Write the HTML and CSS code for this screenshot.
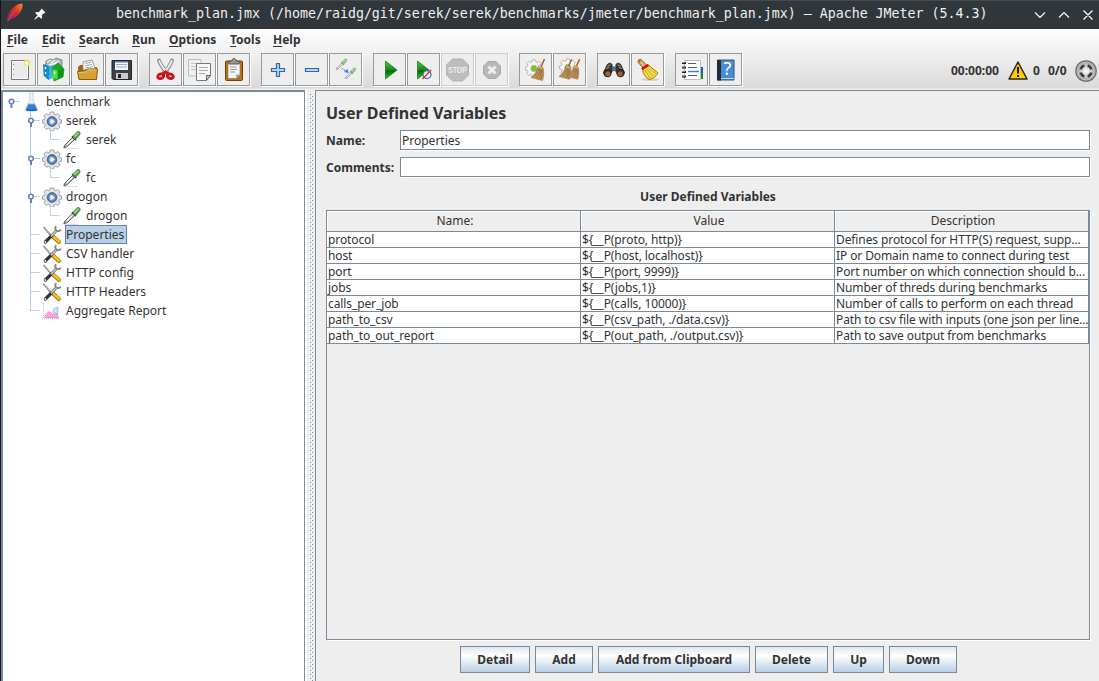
FILE: index.html
```html
<!DOCTYPE html>
<html lang="en">
<head>
<meta charset="utf-8">
<title>Apache JMeter (5.4.3)</title>
<link rel="stylesheet" href="styles.css">
</head>
<body>
<svg class="defs" width="0" height="0">
  <defs>
    <linearGradient id="play" x1="0" y1="0" x2="0" y2="1"><stop offset="0" stop-color="#4fc94f"/><stop offset=".5" stop-color="#138a13"/><stop offset=".55" stop-color="#006400"/><stop offset="1" stop-color="#22d022"/></linearGradient>
    <linearGradient id="flame" x1="1" y1="0" x2="0" y2="1"><stop offset="0" stop-color="#f3a01e"/><stop offset=".4" stop-color="#dc2c2c"/><stop offset="1" stop-color="#752783"/></linearGradient>
    <radialGradient id="blue"><stop offset="0" stop-color="#dce9fb"/><stop offset=".5" stop-color="#8ba9d6"/><stop offset="1" stop-color="#2f568f"/></radialGradient>
    <radialGradient id="grey"><stop offset="0" stop-color="#fff"/><stop offset="1" stop-color="#aaa"/></radialGradient>
    <symbol id="gear" viewBox="0 0 20 20">
      <path d="M8.300 1h3.400l.5 2.200 1.500.6 2-1.200 2.300 2.300-1.200 2 .6 1.500 2.100.5v3.200l-2.100.5-.6 1.500 1.200 2-2.300 2.300-2-1.200-1.500.6-.5 2.200H8.300l-.5-2.200-1.500-.6-2 1.200L2 16.100l1.200-2-.6-1.500-2.100-.5V8.900l2.100-.5.6-1.500-1.200-2 2.300-2.300 2 1.200 1.500-.6z" fill="#e4e5e6" stroke="#94989b" stroke-width=".9"/>
      <circle cx="10" cy="10.500" r="4.900" fill="url(#blue)" stroke="#4a6a98" stroke-width=".8"/>
      <path d="M8.500 7.700v5.600l4.300-2.800z" fill="#f3f7ff"/>
    </symbol>
    <symbol id="pipette" viewBox="0 0 20 20">
      <path d="M2 18.500h14" stroke="#ddd" stroke-width="1"/>
      <path d="M1.800 17.600l1-2.400 7.600-7.700 2.100 2-7.500 7.300z" fill="#bfc3c3" stroke="#444" stroke-width=".9"/>
      <path d="M5 14.700l5.500-5.500" stroke="#fff" stroke-width="1.200"/>
      <path d="M10 6.200l4 4" stroke="#37483b" stroke-width="1.800"/>
      <path d="M13.200 6.800l3-3.300" stroke="#4f9440" stroke-width="4.800" stroke-linecap="round"/>
      <path d="M13 6.200l2.900-3" stroke="#94cb80" stroke-width="2" stroke-linecap="round"/>
    </symbol>
    <symbol id="tools" viewBox="0 0 20 20">
      <path d="M1.500 2l7 8" stroke="#777" stroke-width="1.600"/><path d="M1.500 2l6.500 7" stroke="#ddd" stroke-width=".7"/>
      <path d="M11 11.500l6 5.500" stroke="#9a6600" stroke-width="4" stroke-linecap="round"/>
      <path d="M11 11.300l6 5.500" stroke="#f6bd20" stroke-width="2.800" stroke-linecap="round"/>
      <path d="M3.300 17L9.500 10.800" stroke="#333" stroke-width="3.200" stroke-linecap="round"/>
      <path d="M9 11.200L15 5" stroke="#666" stroke-width="2.800"/>
      <path d="M9 11.200L15 5" stroke="#ccc" stroke-width="1.400"/>
      <path d="M14.200 1.200c-2 2-.6 5.500 2.600 4.800l2.200-1.200" fill="none" stroke="#888" stroke-width="1.900"/>
      <circle cx="3.300" cy="17" r="1" fill="#eee"/>
    </symbol>
    <symbol id="cog" viewBox="0 0 20 20">
      <path d="M8.300 1h3.400l.5 2.200 1.500.6 2-1.200 2.300 2.300-1.200 2 .6 1.500 2.100.5v3.200l-2.100.5-.6 1.500 1.200 2-2.300 2.300-2-1.200-1.500.6-.5 2.200H8.300l-.5-2.200-1.500-.6-2 1.200L2 16.100l1.200-2-.6-1.500-2.100-.5V8.900l2.100-.5.6-1.500-1.200-2 2.300-2.300 2 1.200 1.500-.6z" fill="#f4f4f4" stroke="#b0b0b0" stroke-width="1"/>
      <circle cx="10" cy="10.500" r="3.500" fill="#72c427" stroke="#a9bb98"/>
    </symbol>
    <symbol id="broom" viewBox="0 0 16 24">
      <path d="M14.500 1L10.500 10" stroke="#a06025" stroke-width="1.500"/>
      <path d="M8.500 8l4.500 1.500c1.200 4 .8 9-.5 13L1 19.500C4.500 17 7 13 8.500 8z" fill="#bf9660" stroke="#956d3e" stroke-width=".6"/>
      <path d="M9 11c-1 3-3 6-5.500 8M10 11c0 4-2 7-4 9M11 11c0 4-.5 8-2.500 10M12 12c.3 4-.2 7-1.300 9" fill="none" stroke="#835b31" stroke-width=".6"/>
      <path d="M9 8.500l3.500 1.500" stroke="#d8b27a" stroke-width="1.500"/>
    </symbol>
  </defs>
</svg>
<div class="window">
  <header class="titlebar">
    <svg class="feather" viewBox="0 0 18 20" width="18" height="20"><path d="M1 18.500C1 13 3 8.500 7.500 4.500 10.500 2 14 .2 16.500 1c.5 4-1.500 8-5 11.500C8 15.500 5 16.300 3 16.500L1.500 19z" fill="url(#flame)"/><path d="M2 18C6 11 10 6 15 2" fill="none" stroke="#ef5731" stroke-width=".8"/></svg>
    <svg class="pin" viewBox="0 0 12 12" width="12" height="12"><path d="M7.500.5l4 4-1.200.4-2.400 2.400.2 2.500-1 .9-2.300-2.300L.8 11.800l-.5-.5L3.500 7.200 1.200 4.900l1-.9 2.500.2 2.300-2.400z" fill="#fcfcfc"/></svg>
    <h1 class="caption">benchmark_plan.jmx (/home/raidg/git/serek/serek/benchmarks/jmeter/benchmark_plan.jmx) – Apache JMeter (5.4.3)</h1>
    <svg class="controls" viewBox="0 0 64 12" width="64" height="12" fill="none" stroke="#fcfcfc" stroke-width="1.200"><path d="M1 3.500l5 5 5-5M25 8.500l5-5 5 5M49.500 1.500l9 9M58.500 1.500l-9 9"/></svg>
  </header>
  <div class="chrome">
    <nav class="menu">
      <span class="m-file"><u>F</u>ile</span><span class="m-edit"><u>E</u>dit</span><span class="m-search"><u>S</u>earch</span><span class="m-run"><u>R</u>un</span><span class="m-options"><u>O</u>ptions</span><span class="m-tools"><u>T</u>ools</span><span><u>H</u>elp</span>
    </nav>
    <div class="toolbar">
      <div class="group">
        <span class="tool"><svg viewBox="1 1 31 31"><path d="M8.500 7.500h17v19h-17z" fill="#fafafa" stroke="#777"/><path d="M10 9h14v16H10z" fill="#eaeaea"/><path d="M10.500 11v1M10.500 16v1M10.500 21v1" stroke="#888"/><circle cx="24" cy="10" r="3.500" fill="#f4e66e" opacity=".8"/><circle cx="24" cy="10" r="1.500" fill="#fffbe0"/></svg></span>
        <span class="tool"><svg viewBox="1 1 31 31"><path d="M9 8l4-2 3 1 3-2 6 2v14H8z" fill="#aeb9bd" stroke="#68777e" stroke-width=".8"/><path d="M10 9l4-2M14 10l4-3M18 10l4-2M12 12l8-2" stroke="#f4f8f8" stroke-width="1.300"/><path d="M6.500 11.500l5 2v13l-4.500-4z" fill="#138bcb" stroke="#0973ad" stroke-width=".7"/><path d="M12 13l7-1v12l-7 2.500z" fill="#36b5e7"/><path d="M8.500 14v2M8.500 19v2" stroke="#fff" stroke-width="1.500"/><path d="M15 15l6-5 6 6-1 8-9 4z" fill="#1ca91c" stroke="#168016" stroke-width=".7"/><path d="M15.500 16l5 1.500v8.500l-5-1z" fill="#54e044"/><path d="M21 17.500l5-1.500v7l-5 3z" fill="#119415"/><path d="M17.500 18.500v2.500" stroke="#fff" stroke-width="1.500"/></svg></span>
        <span class="tool"><svg viewBox="1 1 31 31"><path d="M7.500 20v-6l1.500-1.500h5l2 2h9.500v6z" fill="#9d6810" stroke="#8b5908" stroke-width=".8"/><path d="M12 17V9l9-2 3.500 9z" fill="#f7f7f7" stroke="#888" stroke-width=".8"/><path d="M14 10.500l6-1.300M14 12.700l7-1.200M14 15l8-1.300" stroke="#aaa"/><path d="M6.500 18.500l8-.5 2-2h10l-1 10.500H8z" fill="#d7a034" stroke="#8b5a0b"/><path d="M7.500 19.500l7.500-.5 2-2h8.500" stroke="#f0c766" fill="none"/></svg></span>
        <span class="tool"><svg viewBox="1 1 31 31"><path d="M7 7.500h19.500v19H8L7 25.500z" fill="#3f4143" stroke="#222"/><path d="M10 8h13v9H10z" fill="#f3f6fa"/><path d="M10 8h13v1.500H10z" fill="#4b7bb7"/><path d="M11 11.500h11M11 14h11" stroke="#9db2c8"/><path d="M11 20h12v6H11z" fill="#c8cbce"/><path d="M13 21h3v4h-3z" fill="#202327"/></svg></span>
      </div>
      <div class="group">
        <span class="tool"><svg viewBox="1 1 31 31"><path d="M10 7.500c2 5 4.500 9 8.500 12.500M23 7.500c-2 5-4.500 9-8.500 12.500" fill="none" stroke="#858585" stroke-width="3.800" stroke-linecap="round"/><path d="M10.300 8c2 5 4.500 8.500 8 11.500M22.700 8c-2 5-4.500 8.500-8 11.500" fill="none" stroke="#eee" stroke-width="2" stroke-linecap="round"/><g fill="none" stroke="#cf151b" stroke-width="3"><ellipse cx="11.700" cy="23.200" rx="3" ry="2.200" transform="rotate(-20 11.700 23.200)"/><ellipse cx="21.300" cy="23.200" rx="3" ry="2.200" transform="rotate(20 21.300 23.200)"/><path d="M14 21l2.500-2 2.500 2"/></g></svg></span>
        <span class="tool"><svg viewBox="1 1 31 31"><path d="M5.500 6.500h12.500v16.500H5.500z" fill="#f0f0f0" stroke="#bdbdbd"/><path d="M8 10.500h8M8 13.500h6M8 16.500h5" stroke="#c5c5c5"/><path d="M13.500 10.500h14v12l-4.500 5h-9.500z" fill="#f7f7f7" stroke="#777"/><path d="M27.500 22.500h-4v5z" fill="#ccc" stroke="#666"/><path d="M16 14.500h9M16 17.500h9M16 20.500h6" stroke="#aaa"/></svg></span>
        <span class="tool"><svg viewBox="1 1 31 31"><rect x="8.500" y="8" width="17" height="19.500" rx="1" fill="#b96f12" stroke="#754000"/><path d="M11 10h12v12l-3.500 3.500H11z" fill="#f6f6f6" stroke="#777" stroke-width=".7"/><path d="M23 21.500l-4 4v-4z" fill="#aaa"/><path d="M13 14h7M13 16.500h7M13 19h5" stroke="#999"/><path d="M12 11V8h3c0-3.500 4-3.500 4 0h3v3z" fill="#999b8e" stroke="#55574f"/></svg></span>
      </div>
      <div class="group">
        <span class="tool"><svg viewBox="1 1 31 31"><path d="M15.500 10.500h3v5h5v3h-5v5h-3v-5h-5v-3h5z" fill="#b5d5f4" stroke="#3465a4" stroke-width="1.200"/></svg></span>
        <span class="tool"><svg viewBox="1 1 31 31"><path d="M10.500 15.500h13v3h-13z" fill="#b5d5f4" stroke="#3465a4" stroke-width="1.200"/></svg></span>
        <span class="tool"><svg viewBox="1 1 31 31"><g opacity=".65"><use href="#pipette" x="6" y="5" width="13" height="13"/><use href="#pipette" x="15" y="14" width="13" height="13"/></g><path d="M13 15.500l4 2.500" stroke="#4b94f5" stroke-width="1.200" stroke-dasharray="1.500 1"/><path d="M19.500 20l-.8-4-3.700 3z" fill="#2b7ff0"/></svg></span>
      </div>
      <div class="group">
        <span class="tool"><svg viewBox="1 1 31 31"><path d="M12.500 8L24 17 12.500 26z" fill="url(#play)" stroke="#146b14" stroke-width=".7"/></svg></span>
        <span class="tool"><svg viewBox="1 1 31 31"><path d="M10.500 8L22 17 10.500 26z" fill="url(#play)" stroke="#146b14" stroke-width=".7"/><circle cx="20" cy="21.500" r="4" fill="#fff" fill-opacity=".8" stroke="#3f73b9" stroke-width="1.300"/><path d="M15.500 26l8.500-9" stroke="#e52525" stroke-width="1.400"/></svg></span>
        <span class="tool disabled"><svg viewBox="1 1 31 31"><path d="M11.500 6h10l6 6v10l-6 6h-10l-6-6V12z" fill="#bdbdbd" stroke="#b0b0b0"/><text x="16.500" y="20.200" text-anchor="middle" textLength="19" lengthAdjust="spacingAndGlyphs" class="stop">STOP</text></svg></span>
        <span class="tool disabled"><svg viewBox="1 1 31 31"><path d="M13 8.500h8l4.500 4.500v8L21 25.500h-8L8.500 21v-8z" fill="#b8b8b8" stroke="#a8a8a8"/><path d="M13.500 13.500l7 7M20.500 13.500l-7 7" stroke="#eee" stroke-width="3"/></svg></span>
      </div>
      <div class="group">
        <span class="tool"><svg viewBox="1 1 31 31"><use href="#cog" x="6" y="6" width="18" height="18"/><use href="#broom" x="11" y="5" width="16" height="24"/></svg></span>
        <span class="tool"><svg viewBox="1 1 31 31"><use href="#cog" x="6" y="5" width="18" height="18"/><use href="#broom" x="5" y="5" width="15" height="23"/><use href="#broom" x="13" y="5" width="15" height="23"/></svg></span>
      </div>
      <div class="group">
        <span class="tool"><svg viewBox="1 1 31 31"><path d="M10 12c1-2 4-2.500 5-.5l.5 6.500-3 4-6-2zM24 12c-1-2-4-2.500-5-.5l-.5 6.500 3 4 6-2z" fill="#3a3a3a" stroke="#222" stroke-width=".8"/><path d="M15 13.500h4v4.500h-4z" fill="#666"/><circle cx="10.500" cy="20" r="4.200" fill="#292929"/><circle cx="23.500" cy="20" r="4.200" fill="#292929"/><circle cx="10.800" cy="20.700" r="2.500" fill="#a85d31"/><circle cx="23.200" cy="20.700" r="2.500" fill="#a85d31"/><path d="M10.500 13l3-1.200M20.500 11.800l3 1.200M9 15.500l3-1M22 14.500l3 1" stroke="#aaa" stroke-width=".9"/></svg></span>
        <span class="tool"><svg viewBox="1 1 31 31"><ellipse cx="19" cy="26.500" rx="9" ry="1.500" fill="#cfcfcf"/><path d="M9 8.500l5 5" stroke="#976223" stroke-width="5" stroke-linecap="round"/><path d="M9 8.500l5 5" stroke="#e7b76e" stroke-width="3.200" stroke-linecap="round"/><circle cx="8.700" cy="8.300" r=".9" fill="#805017"/><path d="M11.500 16l6-4 9.500 8c-2 3.500-5 6-9 6.500-3.500-2-6-5.500-6.500-10.500z" fill="#ecd84a" stroke="#ad8200"/><path d="M14 17l5 8M16 16l6 7M18 15l7 6" stroke="#c9a913" stroke-width=".8" fill="none"/><path d="M10.800 16.200l6.500-4.400" stroke="#cf1717" stroke-width="2.700"/></svg></span>
      </div>
      <div class="group">
        <span class="tool"><svg viewBox="1 1 31 31"><path d="M24 20h4v6h-4z" fill="#17961b"/><path d="M24 14h4v6h-4z" fill="#1b5bb3"/><path d="M9.500 7.500h16v19h-16z" fill="#fdfdfd" stroke="#bbb"/><path d="M13 10.500h8M13 14.500h9M13 22.500h9" stroke="#4c5c70"/><path d="M13 12.500h0M13 18.500h11" stroke="#3980e8" stroke-width="1.500"/><path d="M7 10h4M7 14.500h4M7 19h4M7 23.500h4" stroke="#222" stroke-width="2"/><path d="M7 9.500h3M7 14h3M7 18.500h3M7 23h3" stroke="#bbb" stroke-width=".7"/></svg></span>
        <span class="tool"><svg viewBox="1 1 31 31"><path d="M8.500 7h16.500v20H8.500z" fill="#4a8ad2" stroke="#285894"/><path d="M8 7h4v20.500H8z" fill="#222b36"/><path d="M12 25.500h13" stroke="#c8d7e8"/><text x="18.500" y="22" text-anchor="middle" class="query">?</text></svg></span>
      </div>
      <div class="status">
        <span class="clock">00:00:00</span>
        <svg class="warn" viewBox="0 0 20 19" width="20" height="19"><path d="M10 1L19 18H1z" fill="#fc0" stroke="#292610" stroke-width="1.500" stroke-linejoin="round"/><path d="M10 6v6.500M10 14v2" stroke="#111" stroke-width="2"/></svg>
        <span class="errors">0</span><span class="threads">0/0</span>
        <svg viewBox="0 0 22 22" width="22" height="22"><circle cx="11" cy="11" r="10.200" fill="#bdbdbd" stroke="#6b6b6b" stroke-width="1.200"/><circle cx="11" cy="11" r="8.500" fill="url(#grey)"/><g fill="none" stroke="#3a3a3a" stroke-width="2.600"><path d="M5.600 9.300A5.700 5.700 0 0 1 9.300 5.600M12.700 5.600A5.700 5.700 0 0 1 16.400 9.300M16.400 12.700A5.700 5.700 0 0 1 12.700 16.400M9.300 16.400A5.700 5.700 0 0 1 5.600 12.700"/></g></svg>
      </div>
    </div>
  </div>
  <main class="body">
    <ul class="tree">
      <li><svg class="i1" viewBox="0 0 20 19"><path d="M11 9.500h6" stroke="#b8cfe5"/><path d="M8.500 11v5" stroke="#6382bf" stroke-width="2"/><circle cx="8.500" cy="9.500" r="2.300" fill="#fff" stroke="#6382bf" stroke-width="1.500"/></svg><svg class="icon" viewBox="0 0 20 20"><path d="M7.800 1h3.400v7.500l4 8c.6 1.500 0 2.500-1 2.500h-10c-1.500 0-1.600-1-1-2.500l4.600-8z" fill="#f0f3f6" stroke="#c2c8ce" stroke-width=".8"/><path d="M6.500 12h6l2.500 5c.3 1 0 2-1 2h-9c-1 0-1.300-1-1-2z" fill="#2f7fd6"/><path d="M6.500 12h6" stroke="#78b7ef"/><path d="M5 17.500c3 1 6 1 9 0" stroke="#1458ad" fill="none"/></svg><span>benchmark</span></li>
      <li><svg class="i2" viewBox="0 0 40 19"><path d="M27.500 0v19" stroke="#b8cfe5"/><path d="M31 9.500h6" stroke="#b8cfe5"/><path d="M28 11v5" stroke="#6382bf" stroke-width="2"/><circle cx="28" cy="9.500" r="2.300" fill="#fff" stroke="#6382bf" stroke-width="1.500"/></svg><svg class="icon"><use href="#gear"/></svg><span>serek</span></li>
      <li><svg class="i3" viewBox="0 0 60 19"><path d="M27.500 0v19M47.500 0v9.500h9" fill="none" stroke="#b8cfe5"/></svg><svg class="icon"><use href="#pipette"/></svg><span>serek</span></li>
      <li><svg class="i2" viewBox="0 0 40 19"><path d="M27.500 0v19" stroke="#b8cfe5"/><path d="M31 9.500h6" stroke="#b8cfe5"/><path d="M28 11v5" stroke="#6382bf" stroke-width="2"/><circle cx="28" cy="9.500" r="2.300" fill="#fff" stroke="#6382bf" stroke-width="1.500"/></svg><svg class="icon"><use href="#gear"/></svg><span>fc</span></li>
      <li><svg class="i3" viewBox="0 0 60 19"><path d="M27.500 0v19M47.500 0v9.500h9" fill="none" stroke="#b8cfe5"/></svg><svg class="icon"><use href="#pipette"/></svg><span>fc</span></li>
      <li><svg class="i2" viewBox="0 0 40 19"><path d="M27.500 0v19" stroke="#b8cfe5"/><path d="M31 9.500h6" stroke="#b8cfe5"/><path d="M28 11v5" stroke="#6382bf" stroke-width="2"/><circle cx="28" cy="9.500" r="2.300" fill="#fff" stroke="#6382bf" stroke-width="1.500"/></svg><svg class="icon"><use href="#gear"/></svg><span>drogon</span></li>
      <li><svg class="i3" viewBox="0 0 60 19"><path d="M27.500 0v19M47.500 0v9.500h9" fill="none" stroke="#b8cfe5"/></svg><svg class="icon"><use href="#pipette"/></svg><span>drogon</span></li>
      <li><svg class="i2" viewBox="0 0 40 19"><path d="M27.500 0v19M27.500 9.500h9" stroke="#b8cfe5"/></svg><svg class="icon"><use href="#tools"/></svg><span class="selected">Properties</span></li>
      <li><svg class="i2" viewBox="0 0 40 19"><path d="M27.500 0v19M27.500 9.500h9" stroke="#b8cfe5"/></svg><svg class="icon"><use href="#tools"/></svg><span>CSV handler</span></li>
      <li><svg class="i2" viewBox="0 0 40 19"><path d="M27.500 0v19M27.500 9.500h9" stroke="#b8cfe5"/></svg><svg class="icon"><use href="#tools"/></svg><span>HTTP config</span></li>
      <li><svg class="i2" viewBox="0 0 40 19"><path d="M27.500 0v19M27.500 9.500h9" stroke="#b8cfe5"/></svg><svg class="icon"><use href="#tools"/></svg><span>HTTP Headers</span></li>
      <li><svg class="i2" viewBox="0 0 40 19"><path d="M27.500 0v9.500h9" fill="none" stroke="#b8cfe5"/></svg><svg class="icon" viewBox="0 0 20 20"><path d="M1.500 2v15.500h16" fill="none" stroke="#bbb" stroke-dasharray="1 1"/><path d="M3 16.500v-2l4-4 4 3 4-1 1.500 4z" fill="#f8a8e2" stroke="#e672c3" stroke-width=".7"/><path d="M11 12c-1-4 2-6 5-5.500v6z" fill="#cfe0fb" stroke="#8eb2ea" stroke-width=".7"/></svg><span>Aggregate Report</span></li>
    </ul>
    <div class="splitter"><svg width="8" height="100%"><defs><pattern id="bumps" width="4" height="4" patternUnits="userSpaceOnUse" y="2"><path d="M1 0h1v1H1zM3 2h1v1H3z" fill="#7a8a99"/><path d="M0 3h1v1H0zM2 1h1v1H2z" fill="#fff"/></pattern></defs><rect x="2" y="3" width="4" height="100%" fill="url(#bumps)"/></svg></div>
    <section class="panel">
      <h2>User Defined Variables</h2>
      <div class="field"><label>Name:</label><div class="input">Properties</div></div>
      <div class="field"><label>Comments:</label><div class="input"></div></div>
      <h3>User Defined Variables</h3>
      <div class="scroll">
        <table>
          <thead><tr><th>Name:</th><th>Value</th><th>Description</th></tr></thead>
          <tbody>
            <tr><td>protocol</td><td>${__P(proto, http)}</td><td>Defines protocol for HTTP(S) request, supp...</td></tr>
            <tr><td>host</td><td>${__P(host, localhost)}</td><td>IP or Domain name to connect during test</td></tr>
            <tr><td>port</td><td>${__P(port, 9999)}</td><td>Port number on which connection should b...</td></tr>
            <tr><td>jobs</td><td>${__P(jobs,1)}</td><td>Number of threds during benchmarks</td></tr>
            <tr><td>calls_per_job</td><td>${__P(calls, 10000)}</td><td>Number of calls to perform on each thread</td></tr>
            <tr><td>path_to_csv</td><td>${__P(csv_path, ./data.csv)}</td><td>Path to csv file with inputs (one json per line...</td></tr>
            <tr><td>path_to_out_report</td><td>${__P(out_path, ./output.csv)}</td><td>Path to save output from benchmarks</td></tr>
          </tbody>
        </table>
      </div>
      <div class="actions"><button class="b-detail">Detail</button><button class="b-add">Add</button><button class="b-clip">Add from Clipboard</button><button class="b-delete">Delete</button><button class="b-up">Up</button><button class="b-down">Down</button></div>
    </section>
  </main>
</div>
</body>
</html>
```
FILE: styles.css
```css
* { box-sizing: border-box; }
body { margin: 0; background: #15171a; color: #333; font: 12px/16px "Noto Sans", "Open Sans", sans-serif; overflow: hidden; }
svg { display: block; flex: none; }
.defs { position: absolute; }
.window { margin-left: 1px; height: 681px; display: flex; flex-direction: column; background: #eee; }
.titlebar { height: 29px; background: #31363b; border-top: 1px solid #434a54; display: flex; align-items: center; color: #fcfcfc; flex: none; }
.feather { margin: -4px 0 0 5px; }
.pin { margin: -2px 0 0 10px; }
.caption { margin: -2px 0 0 70px; width: 872px; font: 13.290px/20px "DejaVu Sans Mono", monospace; white-space: pre; color: #eff0f1; }
.controls { margin: -1px 0 0 46px; }
.chrome { height: 61px; flex: none; background: linear-gradient(#fff, #dadada 59px, #eee 60px); }
.menu { height: 22px; padding-left: 6px; display: flex; align-items: center; font-weight: 700; }
.menu u { text-underline-offset: 2px; }
.m-file { width: 35px; } .m-edit { width: 37px; } .m-search { width: 53px; } .m-run { width: 37px; } .m-options { width: 61px; } .m-tools { width: 43px; }
.toolbar { display: flex; gap: 10px; padding: 2px 0 0 2px; height: 37px; }
.group { display: flex; gap: 1px; padding-right: 1px; }
.tool { width: 33px; height: 33px; border: 1px solid #999; background: #eee; box-shadow: 1px 1px #fff; }
.tool svg { width: 31px; height: 31px; }
.disabled { border-color: #ccc; }
.stop { font: 700 9.500px "Liberation Sans", sans-serif; fill: #eee; }
.query { font: 18px "Noto Sans", sans-serif; fill: #fff; }
.status { margin-left: auto; display: flex; align-items: center; font-weight: 700; padding-right: 2px; height: 35px; }
.clock { width: 57px; }
.warn { margin-right: 5px; }
.errors { width: 15px; }
.threads { width: 27px; }
.body { flex: 1; display: flex; min-height: 0; }
.tree { width: 304px; margin: 0; padding: 0; list-style: none; background: #fff; border: solid #7a8a99; border-width: 2px 1px 0 2px; flex: none; }
.tree li { height: 19px; display: flex; align-items: center; }
.tree span { border: 1px solid transparent; padding: 0 2px 0 0; height: 19px; line-height: 17px; margin-left: 2px; white-space: nowrap; }
.tree .selected { background: #b8cfe5; border-color: #6382bf; }
.i1 { width: 20px; height: 19px; } .i2 { width: 40px; height: 19px; } .i3 { width: 60px; height: 19px; }
.icon { width: 20px; height: 20px; margin: 0 0 0 -1px; }
.icon + span { margin-left: 3px; }
.splitter { width: 10px; border-left: 2px solid #fff; flex: none; }
.panel { flex: 1; border: solid #7a8a99; border-width: 1px 0 0 1px; padding: 12px 9px 8px 10px; display: flex; flex-direction: column; min-width: 0; }
h2 { margin: 0 0 6px; font-size: 16px; line-height: 21px; letter-spacing: -.04px; }
.field { display: flex; height: 20px; margin-bottom: 7px; font-weight: 700; line-height: 22px; }
.field label { width: 74px; white-space: nowrap; }
.input { flex: 1; border: 1px solid #7a8a99; background: #fff; padding-left: 1px; font-weight: 400; line-height: 20px; box-shadow: 1px 1px #fff; }
h3 { margin: 5px 0 5px; text-align: center; font-size: 12px; line-height: 16px; }
.scroll { flex: 1; border: 1px solid #7a8a99; box-shadow: 1px 1px #fff; }
table { width: 762px; table-layout: fixed; border-collapse: separate; border-spacing: 0; }
th { height: 21px; padding: 0 0 0 3px; font-weight: 400; text-align: center; border: solid #7a8a99; border-width: 0 1px 1px 0; box-shadow: inset 1px 1px #fff; }
td { height: 16px; line-height: 15px; padding: 0 0 0 1px; background: #fff; border: solid #7a8a99; border-width: 0 1px 1px 0; white-space: nowrap; letter-spacing: -.1px; }
.actions { display: flex; gap: 5px; margin-top: 6px; padding-left: 134px; }
button { height: 27px; padding: 0; border: 1px solid #7a8a99; background: linear-gradient(#dde8f3, #fff 35%, #eef3f8 50%, #b8cfe5); color: #333; font: 700 12px/20px "Noto Sans", sans-serif; }
.b-detail { width: 70px; } .b-add { width: 58px; } .b-clip { width: 152px; } .b-delete { width: 73px; } .b-up { width: 51px; } .b-down { width: 68px; }
```
